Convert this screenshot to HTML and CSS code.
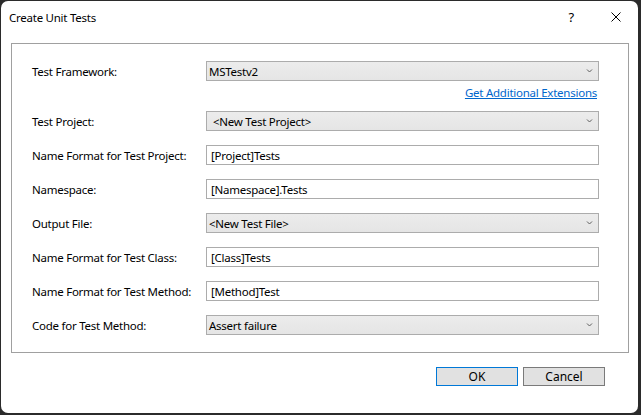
FILE: index.html
```html
<!DOCTYPE html>
<html lang="en">
<head>
    <meta charset="UTF-8">
    <title>Create Unit Tests</title>
    <link rel="stylesheet" href="styles.css">
</head>
<body>
    <div class="window">
        <div class="titlebar">
            <span class="title">Create Unit Tests</span>
            <span class="help">?</span>
            <svg class="close" width="10" height="10" viewBox="0 0 10 10">
                <path d="M0.5 0.5 L9.5 9.5 M9.5 0.5 L0.5 9.5" stroke="#000" stroke-width="1" fill="none"/>
            </svg>
        </div>

        <div class="group">
            <div class="row">
                <label>Test Framework:</label>
                <div class="combo"><span>MSTestv2</span><svg class="chev" width="7" height="4" viewBox="0 0 7 4"><path d="M1 0.5 L3.5 3 L6 0.5" stroke="#5f5f5f" fill="none"/></svg></div>
            </div>
            <div class="link-row">
                <a href="#" class="link">Get Additional Extensions</a>
            </div>
            <div class="row">
                <label>Test Project:</label>
                <div class="combo combo-wide"><span>&lt;New Test Project&gt;</span><svg class="chev" width="7" height="4" viewBox="0 0 7 4"><path d="M1 0.5 L3.5 3 L6 0.5" stroke="#5f5f5f" fill="none"/></svg></div>
            </div>
            <div class="row">
                <label>Name Format for Test Project:</label>
                <div class="textbox">[Project]Tests</div>
            </div>
            <div class="row">
                <label>Namespace:</label>
                <div class="textbox">[Namespace].Tests</div>
            </div>
            <div class="row">
                <label>Output File:</label>
                <div class="combo"><span>&lt;New Test File&gt;</span><svg class="chev" width="7" height="4" viewBox="0 0 7 4"><path d="M1 0.5 L3.5 3 L6 0.5" stroke="#5f5f5f" fill="none"/></svg></div>
            </div>
            <div class="row">
                <label>Name Format for Test Class:</label>
                <div class="textbox">[Class]Tests</div>
            </div>
            <div class="row">
                <label>Name Format for Test Method:</label>
                <div class="textbox">[Method]Test</div>
            </div>
            <div class="row">
                <label>Code for Test Method:</label>
                <div class="combo"><span>Assert failure</span><svg class="chev" width="7" height="4" viewBox="0 0 7 4"><path d="M1 0.5 L3.5 3 L6 0.5" stroke="#5f5f5f" fill="none"/></svg></div>
            </div>
        </div>

        <div class="buttons">
            <button class="btn btn-default">OK</button>
            <button class="btn">Cancel</button>
        </div>
    </div>
</body>
</html>
```

FILE: styles.css
```css
* {
    box-sizing: border-box;
    margin: 0;
    padding: 0;
}

body {
    background-color: #2b2b2b;
    font-family: 'Noto Sans', 'Open Sans', sans-serif;
    font-size: 11.5px;
    letter-spacing: -0.25px;
    color: #000;
    width: 641px;
    height: 415px;
    overflow: hidden;
}

.window {
    margin: 1px 0 0 1px;
    width: 637px;
    height: 412px;
    background-color: #fff;
    border-radius: 7px;
    display: flex;
    flex-direction: column;
}

.titlebar {
    height: 32px;
    display: flex;
    align-items: center;
    padding-left: 8px;
}

.title {
    flex: 1;
}

.help {
    font-size: 13px;
    margin-right: 37px;
}

.close {
    margin-right: 17px;
}

.group {
    margin: 10px 0 0 10px;
    width: 618px;
    height: 310px;
    border: 1px solid #a0a0a0;
    padding: 17px 0 0 20px;
}

.row {
    display: flex;
    align-items: center;
    height: 20px;
    margin-bottom: 14px;
}

.row label {
    width: 174px;
}

.combo,
.textbox {
    width: 393px;
    height: 20px;
    border: 1px solid #acacac;
    display: flex;
    align-items: center;
}

.combo {
    background: linear-gradient(#ececec, #e5e5e5);
    padding: 0 5px 0 2px;
    justify-content: space-between;
}

.combo-wide {
    padding-left: 6px;
}

.textbox {
    background-color: #fff;
    padding-left: 4px;
}

.link-row {
    margin: -10px 0 0 0;
    height: 26px;
    width: 567px;
    text-align: right;
    padding-right: 2px;
}

.link {
    color: #0066cc;
    text-decoration: underline;
}

.buttons {
    display: flex;
    justify-content: flex-end;
    gap: 5px;
    margin-top: 14px;
    padding-right: 33px;
}

.btn {
    width: 82px;
    height: 19px;
    background-color: #e1e1e1;
    border: 1px solid #7a7a7a;
    font-family: inherit;
    font-size: 12px;
    color: #000;
}

.btn-default {
    border-color: #0078d7;
}
```
